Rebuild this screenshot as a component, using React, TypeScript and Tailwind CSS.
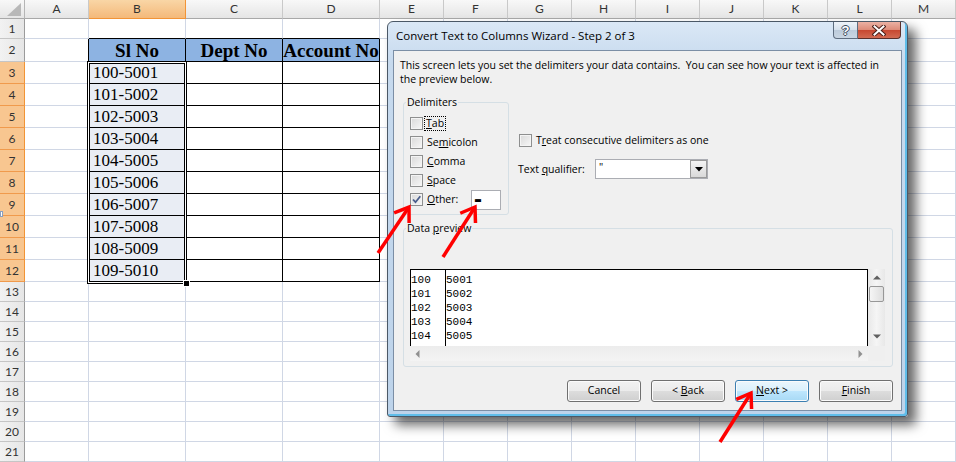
import React from 'react';

const cols = [
  { key: 'A', w: 'w-[64px]' },
  { key: 'B', w: 'w-[97px]' },
  { key: 'C', w: 'w-[97px]' },
  { key: 'D', w: 'w-[97px]' },
  { key: 'E', w: 'w-[64px]' },
  { key: 'F', w: 'w-[64px]' },
  { key: 'G', w: 'w-[64px]' },
  { key: 'H', w: 'w-[64px]' },
  { key: 'I', w: 'w-[64px]' },
  { key: 'J', w: 'w-[64px]' },
  { key: 'K', w: 'w-[64px]' },
  { key: 'L', w: 'w-[64px]' },
  { key: 'M', w: 'w-[64px]' },
];

const rows = Array.from({ length: 21 }, (_, i) => i + 1);

const ids = ['100-5001', '101-5002', '102-5003', '103-5004', '104-5005', '105-5006', '106-5007', '107-5008', '108-5009', '109-5010'];
const heads: Record<string, string> = { B: 'Sl No', C: 'Dept No', D: 'Account No' };

const preview = [
  ['100', '5001'],
  ['101', '5002'],
  ['102', '5003'],
  ['103', '5004'],
  ['104', '5005'],
];

function rowHeight(r: number) {
  if (r === 2) return 'h-[23px]';
  if (r >= 3 && r <= 12) return 'h-[22px]';
  return 'h-[20px]';
}

function Cell({ r, c, w }: { r: number; c: string; w: string }) {
  const tableCol = c === 'B' || c === 'C' || c === 'D';
  const inTable = tableCol && r >= 2 && r <= 12;
  const rightBlack = (tableCol || c === 'A') && r >= 2 && r <= 12;
  const bottomBlack = tableCol && r >= 1 && r <= 12;
  let bg = 'bg-white';
  if (inTable && r === 2) bg = 'bg-[#8db3e2]';
  else if (c === 'B' && r >= 3 && r <= 12) bg = 'bg-[#e9edf4]';

  let content: React.ReactNode = null;
  if (inTable && r === 2) {
    content = (
      <div className="w-full text-center whitespace-nowrap font-bold text-[19px] leading-[23px]">{heads[c]}</div>
    );
  } else if (c === 'B' && r >= 3 && r <= 12) {
    content = <div className="pl-[4px] text-[17px] leading-[22px] whitespace-nowrap">{ids[r - 3]}</div>;
  }

  return (
    <div
      className={`${w} h-full shrink-0 border-r border-b flex items-center font-['Liberation_Serif',serif] text-black ${bg} ${
        rightBlack ? 'border-r-black' : 'border-r-[#d0d7e5]'
      } ${bottomBlack ? 'border-b-black' : 'border-b-[#d0d7e5]'}`}
    >
      {content}
    </div>
  );
}

function Check({ checked }: { checked?: boolean }) {
  return (
    <span className="w-[13px] h-[13px] shrink-0 border border-[#8e8f8f] bg-[linear-gradient(135deg,#d9d9d9,#f7f7f7)] shadow-[inset_0_0_0_1px_#f4f4f4] flex items-center justify-center">
      {checked && (
        <svg width="11" height="11" viewBox="0 0 11 11">
          <path d="M2 5.5 L4.5 8.2 L9.3 2.2" fill="none" stroke="#4a5e8c" strokeWidth="1.8" />
        </svg>
      )}
    </span>
  );
}

function Btn({ children, hot }: { children: React.ReactNode; hot?: boolean }) {
  return (
    <div
      className={`w-[74px] h-[22px] shrink-0 rounded-[3px] border flex items-center justify-center shadow-[inset_0_0_0_1px_#fbfbfb] ${
        hot
          ? 'border-[#3c7fb1] bg-[linear-gradient(#eaf6fd_0%,#d9f0fc_50%,#bee6fd_50%,#a7d9f5_100%)]'
          : 'border-[#707070] bg-[linear-gradient(#f2f2f2_0%,#ebebeb_50%,#dddddd_50%,#cfcfcf_100%)]'
      }`}
    >
      <span className="whitespace-pre">{children}</span>
    </div>
  );
}

function Arrow({ x1, y1, x2, y2 }: { x1: number; y1: number; x2: number; y2: number }) {
  const a = Math.atan2(y2 - y1, x2 - x1);
  const L = 16;
  const s = 0.6;
  const p1 = `${x2 - L * Math.cos(a - s)},${y2 - L * Math.sin(a - s)}`;
  const p2 = `${x2 - L * Math.cos(a + s)},${y2 - L * Math.sin(a + s)}`;
  return (
    <g>
      <line x1={x1} y1={y1} x2={x2} y2={y2} />
      <polyline points={`${p1} ${x2},${y2} ${p2}`} />
    </g>
  );
}

function Sheet() {
  return (
    <div className="flex flex-col font-['Lato',sans-serif] text-[12px] text-[#333]">
      <div className="flex h-[19px]">
        <div className="w-[25px] h-full shrink-0 border-r border-b border-r-[#b5b5b5] border-b-[#a8a8a8] bg-[linear-gradient(#f8f8f8,#e5e5e5)]">
          <svg width="24" height="18" viewBox="0 0 24 18">
            <polygon points="7,16 21,16 21,3" fill="#b8b8b8" />
          </svg>
        </div>
        {cols.map((c) => (
          <div
            key={c.key}
            className={`${c.w} h-full shrink-0 border-r border-b flex items-center justify-center ${
              c.key === 'B'
                ? 'bg-[linear-gradient(#f9d6a6,#f4b97a)] border-r-[#f29436] border-b-[#f29436]'
                : 'bg-[linear-gradient(#f8f8f8,#e5e5e5)] border-r-[#c9c9c9] border-b-[#a8a8a8]'
            }`}
          >
            {c.key}
          </div>
        ))}
      </div>
      {rows.map((r) => {
        const sel = r >= 3 && r <= 12;
        return (
          <div key={r} className={`flex ${rowHeight(r)}`}>
            <div
              className={`w-[25px] h-full shrink-0 border-r border-b flex items-center justify-center ${
                sel
                  ? 'bg-[#f8c690] border-b-[#f09a4c] border-r-[#f29436]'
                  : 'bg-[linear-gradient(90deg,#f2f2f2,#e6e6e6)] border-b-[#c5c5c5] border-r-[#9b9b9b]'
              }`}
            >
              {r}
            </div>
            {cols.map((c) => (
              <Cell key={c.key} r={r} c={c.key} w={c.w} />
            ))}
          </div>
        );
      })}
    </div>
  );
}

function Dialog() {
  return (
    <div className="absolute left-[387px] top-[21px] w-[521px] h-[396px] flex flex-col rounded-t-[6px] rounded-b-[3px] border border-[#4b5866] bg-[linear-gradient(180deg,#dbe8f6_0%,#c7daee_10%,#bdd3ea_100%)] px-[5px] pb-[5px] shadow-[inset_-2px_-2px_0_#5fbde9,8px_8px_12px_rgba(0,0,0,0.6)] font-['Open_Sans',sans-serif] text-[10.5px] text-black">
      <div className="h-[28px] shrink-0 flex items-start justify-between">
        <div className="self-center pl-[3px] text-[11.5px] leading-[16px] whitespace-nowrap">Convert Text to Columns Wizard - Step 2 of 3</div>
        <div className="flex mr-[1px]">
          <div className="w-[25px] h-[17px] border border-t-0 border-[#5e6d7f] rounded-bl-[4px] bg-[linear-gradient(#eef3f9_0%,#d6e1ec_50%,#bccbdb_50%,#c9d6e3_100%)] flex items-center justify-center font-['Liberation_Sans',sans-serif] font-bold text-[13px] leading-none text-white [text-shadow:1px_0_#3a4a5c,-1px_0_#3a4a5c,0_1px_#3a4a5c,0_-1px_#3a4a5c]">
            ?
          </div>
          <div className="w-[43px] h-[17px] border border-t-0 border-l-0 border-[#5b2f2a] rounded-br-[4px] bg-[linear-gradient(#ebb1a3_0%,#dc8a77_50%,#c7462f_50%,#d26a52_100%)] flex items-center justify-center">
            <svg width="14" height="11" viewBox="0 0 14 11">
              <path d="M2.5 1.5 L11.5 9.5 M11.5 1.5 L2.5 9.5" stroke="#4a1f18" strokeWidth="4" strokeLinecap="square" />
              <path d="M2.5 1.5 L11.5 9.5 M11.5 1.5 L2.5 9.5" stroke="#ffffff" strokeWidth="2" strokeLinecap="square" />
            </svg>
          </div>
        </div>
      </div>

      <div className="flex-1 min-h-0 flex flex-col border border-[#7b8ea5] bg-[#f0f0f0]">
        <div className="pt-[7px] pl-[6px] leading-[14px] whitespace-nowrap">
          <div>This screen lets you set the delimiters your data contains.&nbsp; You can see how your text is affected in</div>
          <div>the preview below.</div>
        </div>

        <div className="flex mt-[9px] ml-[9px]">
          <fieldset className="w-[106px] h-[120px] p-0 m-0 border border-[#d5dfe5] rounded-[3px]">
            <legend className="ml-[2px] px-[1px] leading-[14px]">Delimiters</legend>
            <div className="flex flex-col pt-[5px] pl-[6px]">
              <div className="h-[19px] flex items-center gap-[1px]">
                <Check />
                <span className="ml-[1px] px-[1px] leading-[13px] outline-1 outline-dotted outline-black">
                  <span className="underline">T</span>ab
                </span>
              </div>
              <div className="h-[19px] flex items-center gap-[4px]">
                <Check />
                <span>
                  Se<span className="underline">m</span>icolon
                </span>
              </div>
              <div className="h-[19px] flex items-center gap-[4px]">
                <Check />
                <span>
                  <span className="underline">C</span>omma
                </span>
              </div>
              <div className="h-[19px] flex items-center gap-[4px]">
                <Check />
                <span>
                  <span className="underline">S</span>pace
                </span>
              </div>
              <div className="h-[19px] flex items-center gap-[4px]">
                <Check checked />
                <span className="w-[40px]">
                  <span className="underline">O</span>ther:
                </span>
                <div className="w-[30px] h-[20px] border border-[#abadb3] bg-white flex items-center pl-[2px] pb-[1px] font-['Liberation_Sans',sans-serif] font-black text-[24px] leading-none">
                  -
                </div>
              </div>
            </div>
          </fieldset>

          <div className="flex flex-col ml-[10px]">
            <div className="mt-[36px] h-[19px] flex items-center gap-[4px]">
              <Check />
              <span>
                T<span className="underline">r</span>eat consecutive delimiters as one
              </span>
            </div>
            <div className="mt-[9px] h-[20px] flex items-center">
              <span className="w-[76px] -ml-[1px] pt-[2px]">
                Text <span className="underline">q</span>ualifier:
              </span>
              <div className="ml-[1px] w-[113px] h-[20px] border border-[#abadb3] bg-white flex justify-between">
                <span className="pl-[3px] leading-[14px]">"</span>
                <div className="w-[17px] h-full border border-[#9a9a9a] bg-[linear-gradient(#f4f4f4,#d9d9d9)] flex items-center justify-center">
                  <svg width="8" height="5" viewBox="0 0 8 5">
                    <polygon points="0,0 8,0 4,4.5" fill="#000" />
                  </svg>
                </div>
              </div>
            </div>
          </div>
        </div>

        <fieldset className="mt-[6px] ml-[9px] w-[490px] h-[146px] p-0 border border-[#d5dfe5] rounded-[3px]">
          <legend className="ml-[2px] px-[1px] leading-[14px]">
            Data <span className="underline">p</span>review
          </legend>
          <div className="pt-[34px] pl-[6px]">
            <div className="flex">
              <div className="w-[458px] h-[77px] border-t border-l border-r border-black bg-white overflow-hidden flex font-['Liberation_Mono',monospace] text-[11px] leading-[14px]">
                <div className="w-[35px] shrink-0 h-full border-r border-black pt-[3px]">
                  {preview.map((p) => (
                    <div key={p[0]}>{p[0]}</div>
                  ))}
                </div>
                <div className="pt-[3px]">
                  {preview.map((p) => (
                    <div key={p[1]}>{p[1]}</div>
                  ))}
                </div>
              </div>
              <div className="w-[17px] h-[77px] bg-[linear-gradient(90deg,#e8e8e8,#f5f5f5,#e8e8e8)] flex flex-col items-center">
                <svg className="mt-[6px]" width="8" height="5" viewBox="0 0 8 5">
                  <polygon points="0,4.5 8,4.5 4,0.5" fill="#606060" />
                </svg>
                <div className="mt-[6px] w-[15px] h-[16px] rounded-[2px] border border-[#979797] bg-[linear-gradient(90deg,#f5f5f5,#dedede)]" />
                <svg className="mt-[32px]" width="8" height="5" viewBox="0 0 8 5">
                  <polygon points="0,0.5 8,0.5 4,4.5" fill="#606060" />
                </svg>
              </div>
            </div>
            <div className="flex">
              <div className="w-[458px] h-[15px] bg-[linear-gradient(#ececec,#f4f4f4)] flex items-center justify-between px-[5px]">
                <svg width="5" height="8" viewBox="0 0 5 8">
                  <polygon points="4.5,0 4.5,8 0.5,4" fill="#909090" />
                </svg>
                <svg width="5" height="8" viewBox="0 0 5 8">
                  <polygon points="0.5,0 0.5,8 4.5,4" fill="#909090" />
                </svg>
              </div>
              <div className="w-[17px] h-[15px] bg-[#efefef]" />
            </div>
          </div>
        </fieldset>

        <div className="mt-[13px] flex justify-end gap-[10px] pr-[8px]">
          <Btn>Cancel</Btn>
          <Btn>
            {'< '}
            <span className="underline">B</span>ack
          </Btn>
          <Btn hot>
            <span className="underline">N</span>
            {'ext >'}
          </Btn>
          <Btn>
            <span className="underline">F</span>inish
          </Btn>
        </div>
      </div>
    </div>
  );
}

export default function App() {
  return (
    <div className="relative w-[956px] h-[462px] overflow-hidden bg-white">
      <Sheet />
      <div className="absolute left-[87px] top-[61px] w-[100px] h-[223px] border border-black shadow-[inset_0_0_0_1px_#fff,inset_0_0_0_2px_#000]" />
      <div className="absolute left-[183px] top-[280px] w-[7px] h-[7px] bg-black border border-white" />
      <div className="absolute left-0 top-[211px] w-[3px] h-[6px] border border-[#8aa0c0] bg-white" />
      <Dialog />
      <svg className="absolute inset-0 pointer-events-none" width="956" height="462">
        <g stroke="#ff0000" strokeWidth="3.5" fill="none" strokeLinejoin="miter">
          <Arrow x1={378} y1={253} x2={409} y2={207} />
          <Arrow x1={443} y1={257} x2={475} y2={207} />
          <Arrow x1={720} y1={442} x2={751} y2={393} />
        </g>
      </svg>
    </div>
  );
}
